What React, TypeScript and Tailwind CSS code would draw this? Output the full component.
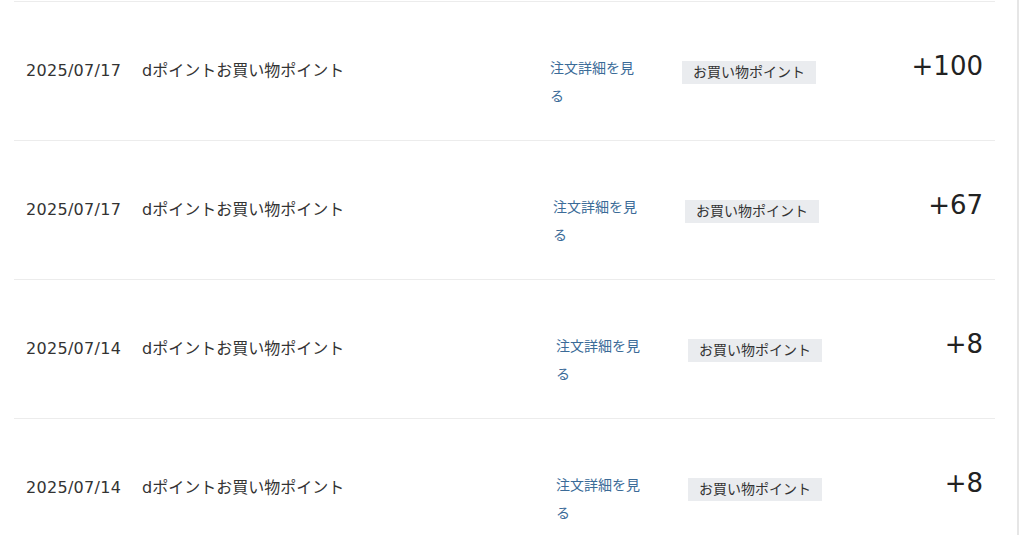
import React from "react";

type Row = { date: string; pts: string; ptsW: string };

const rows: Row[] = [
  { date: "2025/07/17", pts: "+100", ptsW: "w-[167px]" },
  { date: "2025/07/17", pts: "+67", ptsW: "w-[164px]" },
  { date: "2025/07/14", pts: "+8", ptsW: "w-[161px]" },
  { date: "2025/07/14", pts: "+8", ptsW: "w-[161px]" },
];

export default function App() {
  return (
    <div
      className="flex h-[535px] w-[1024px] overflow-hidden bg-white text-[#333]"
      style={{ fontFamily: '"DejaVu Sans", "Noto Sans CJK JP", sans-serif' }}
    >
      <div className="w-[1017px] shrink-0 pt-px">
        <div className="ml-[14px] w-[981px]">
          {rows.map((r, i) => (
            <div
              key={i}
              className="flex h-[139px] items-start border-t border-[#ececec] px-3"
            >
              <div className="mt-[57px] w-[116px] shrink-0 text-[16px] leading-[24px] tracking-[0.3px]">
                {r.date}
              </div>
              <div className="mt-[57px] min-w-0 flex-1 text-[16px] leading-[24px]">
                dポイントお買い物ポイント
              </div>
              <div className="mt-[52px] w-[132px] shrink-0 pr-[42px] text-[14px] leading-[28px] text-[#3b6b98]">
                注文詳細を見る
              </div>
              <div className="mt-[59px] shrink-0 bg-[#eaecef] px-[11px] text-[14px] leading-[23px] text-[#333]">
                お買い物ポイント
              </div>
              <div
                className={`${r.ptsW} mt-[51px] shrink-0 text-right text-[26px] leading-[26px] text-[#222]`}
              >
                {r.pts}
              </div>
            </div>
          ))}
        </div>
      </div>
      <div className="w-[2px] shrink-0 bg-[#e6e6e6]" />
      <div className="flex-1 bg-white" />
    </div>
  );
}
